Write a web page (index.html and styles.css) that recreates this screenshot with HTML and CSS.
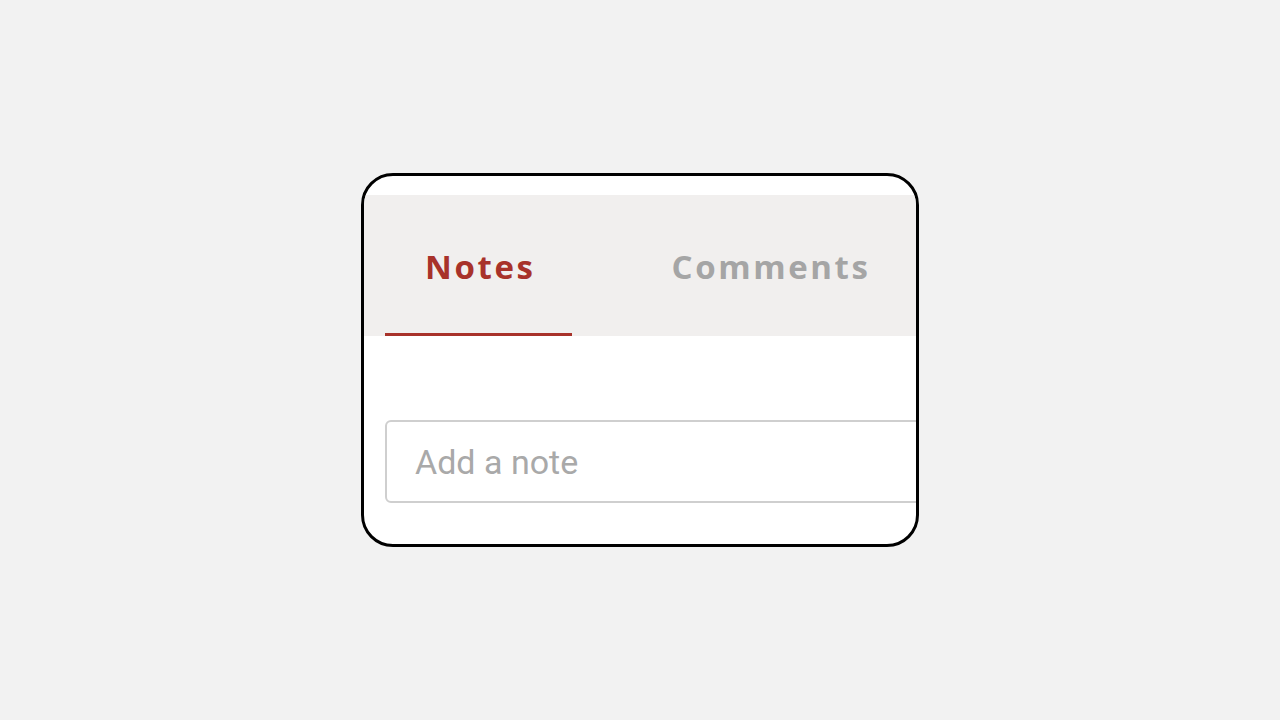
FILE: index.html
```html
<!DOCTYPE html>
<html lang="en">
<head>
  <meta charset="UTF-8">
  <title>Notes</title>
  <link rel="stylesheet" href="styles.css">
</head>
<body>

  <div class="frame">
    <div class="tabs">
      <div class="tab active">Notes</div>
      <div class="tab">Comments</div>
    </div>

    <div class="note-box">
      <input type="text" class="note-input" placeholder="Add a note">
    </div>
  </div>

</body>
</html>
```

FILE: styles.css
```css
* {
  box-sizing: border-box;
}

body {
  margin: 0;
  background: #f2f2f2;
  font-family: Roboto, 'Liberation Sans', sans-serif;
  min-height: 100vh;
  display: flex;
  justify-content: center;
  padding-top: 173px;
}

.frame {
  width: 558px;
  height: 374px;
  background: #ffffff;
  border: 3px solid #000;
  border-radius: 32px;
  overflow: hidden;
  padding-top: 19px;
}

.tabs {
  display: flex;
  gap: 60px;
  background: #f1efee;
  height: 141px;
  padding-left: 21px;
  width: 700px;
}

.tab {
  display: flex;
  align-items: center;
  justify-content: center;
  padding: 4px 36px 0 40px;
  font-family: 'Open Sans', Roboto, sans-serif;
  font-size: 33px;
  font-weight: 700;
  letter-spacing: 2.6px;
  color: #a5a5a5;
  border-bottom: 3px solid transparent;
}

.tab.active {
  color: #a8322a;
  border-bottom-color: #a8322a;
}

.note-box {
  padding: 84px 0 0 21px;
}

.note-input {
  width: 700px;
  height: 83px;
  padding: 0 28px;
  border: 2px solid #cfcfcf;
  border-radius: 6px;
  font-family: Roboto, 'Liberation Sans', sans-serif;
  font-size: 34px;
  color: #333;
  outline: none;
}

.note-input::placeholder {
  color: #a9a9a9;
}
```
